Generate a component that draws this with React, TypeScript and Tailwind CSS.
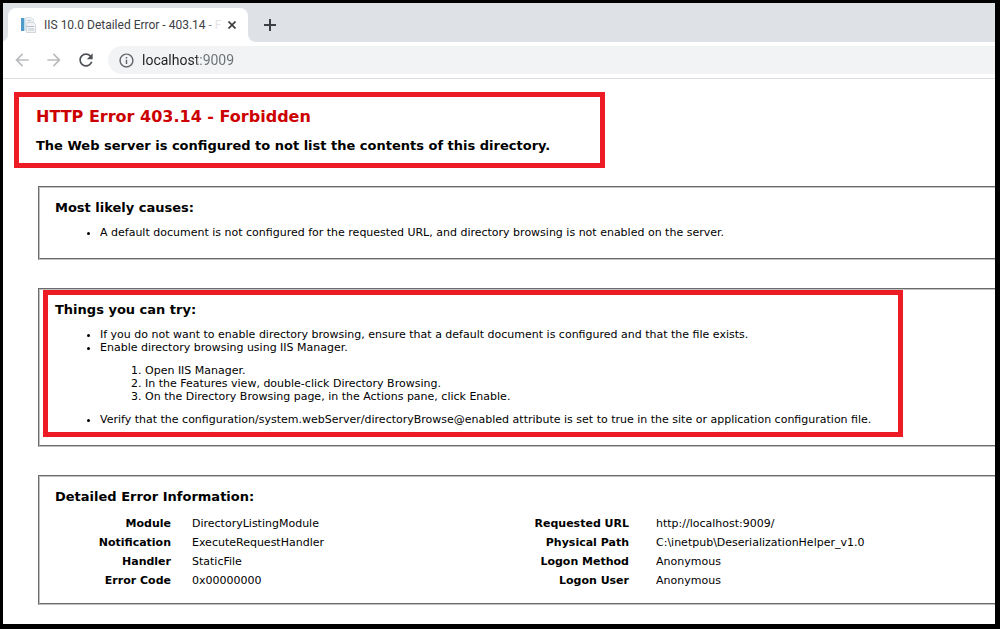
import type { ReactNode } from "react";

function Favicon() {
  return (
    <svg width="17" height="16" viewBox="0 0 17 16" className="shrink-0" aria-hidden="true">
      <rect x="1" y="1" width="3" height="13" fill="#4f9ac9" />
      <rect x="4" y="1" width="1" height="13" fill="#b9dbee" />
      <path d="M5.500 .5h6l2 2v11h-8z" fill="#eef1f4" stroke="#dde2e7" />
      <path d="M7 3.500h4" stroke="#c3cbd3" />
      <path d="M7.500 5.500h6l2 2v8h-9v-8z" fill="#f1f3f6" stroke="#d0d6dc" />
      <path d="M7 9.500h7" stroke="#b4bdc6" />
      <rect x="8" y="11" width="6" height="3" fill="#d8dde2" />
    </svg>
  );
}

function Icon({ d, className }: { d: string; className: string }) {
  return (
    <svg viewBox="0 0 24 24" fill="currentColor" className={className} aria-hidden="true">
      <path d={d} />
    </svg>
  );
}

function TabBar() {
  return (
    <div className="flex h-[39px] items-end bg-[#dee1e6]">
      <svg viewBox="0 0 5 8" className="h-2 w-[5px] shrink-0" aria-hidden="true">
        <path d="M5 0v8H0V7.400C3 6.300 5 3.500 5 0z" fill="#fff" />
      </svg>
      <div className="flex h-[34px] w-60 shrink-0 items-center rounded-t-lg bg-white pr-2 pl-3">
        <Favicon />
        <div className="ml-[7px] flex-1 text-[12px] leading-4 whitespace-nowrap text-[#3c4043]">
          IIS 10.0 Detailed Error - 403.14 <span className="text-[#85888a]">-</span> <span className="text-[#e4e5e6]">F</span>
        </div>
        <button type="button" aria-label="Close tab" className="flex size-4 shrink-0 items-center justify-center text-[#3c4043]">
          <svg viewBox="0 0 8 8" className="size-2" aria-hidden="true">
            <path d="M.5 .5l7 7M7.500 .5l-7 7" stroke="currentColor" strokeWidth="1.7" />
          </svg>
        </button>
      </div>
      <svg viewBox="0 0 8 8" className="size-2 shrink-0" aria-hidden="true">
        <path d="M0 0v8h8C3.600 8 0 4.400 0 0z" fill="#fff" />
      </svg>
      <button type="button" aria-label="New tab" className="flex h-[34px] w-7 items-center justify-center text-[#3c4043]">
        <svg viewBox="0 0 12 12" className="size-3" aria-hidden="true">
          <path d="M6 0v12M0 6h12" stroke="currentColor" strokeWidth="2" />
        </svg>
      </button>
    </div>
  );
}

function Toolbar() {
  return (
    <div className="flex h-[37px] items-center border-b border-[#dcdde0] bg-white pl-[9px]">
      <button type="button" aria-label="Back" className="text-[#babcbe]">
        <Icon className="size-5" d="M20 11H7.830l5.590-5.590L12 4l-8 8 8 8 1.410-1.410L7.830 13H20v-2z" />
      </button>
      <button type="button" aria-label="Forward" className="ml-3 text-[#babcbe]">
        <Icon className="size-5" d="M12 4l-1.410 1.410L16.170 11H4v2h12.170l-5.580 5.590L12 20l8-8z" />
      </button>
      <button type="button" aria-label="Reload" className="ml-3 text-[#4d5156]">
        <Icon
          className="size-5"
          d="M17.650 6.350C16.200 4.900 14.210 4 12 4c-4.420 0-7.990 3.580-7.990 8s3.570 8 7.990 8c3.730 0 6.840-2.550 7.730-6h-2.080c-.82 2.330-3.040 4-5.650 4-3.310 0-6-2.690-6-6s2.690-6 6-6c1.660 0 3.140.69 4.220 1.780L13 11h7V4l-2.350 2.350z"
        />
      </button>
      <div className="ml-3 flex h-7 min-w-0 flex-1 items-center rounded-l-full bg-[#f1f3f4] pl-[10px]">
        <Icon
          className="size-[17px] shrink-0 text-[#5f6368]"
          d="M11 7h2v2h-2V7zm0 4h2v6h-2v-6zm1-9C6.480 2 2 6.480 2 12s4.480 10 10 10 10-4.480 10-10S17.520 2 12 2zm0 18c-4.410 0-8-3.590-8-8s3.590-8 8-8 8 3.590 8 8-3.590 8-8 8z"
        />
        <input
          type="text"
          aria-label="Address"
          defaultValue="localhost:9009"
          className="ml-[7px] min-w-0 flex-1 bg-[linear-gradient(to_right,#202124_55px,#6b6f74_55px)] bg-clip-text text-[14px] leading-5 text-transparent outline-none"
        />
      </div>
    </div>
  );
}

function Panel({ children, className }: { children: ReactNode; className: string }) {
  return (
    <section
      className={`ml-[35px] border-2 border-r-0 border-[#c0c0c0] [border-style:groove] [border-right-style:none] ${className}`}
    >
      {children}
    </section>
  );
}

function PanelTitle({ children }: { children: ReactNode }) {
  return <h3 className="text-[13px] leading-4 font-bold">{children}</h3>;
}

function DetailTable({ rows, wide }: { rows: string[][]; wide?: boolean }) {
  return (
    <table className="w-full table-fixed">
      <tbody>
        {rows.map(([label, value]) => (
          <tr key={label} className="h-[19px]">
            <th scope="row" className={wide ? "w-[104px] text-right font-bold" : "w-[116px] text-right font-bold"}>
              {label}
            </th>
            <td className={wide ? "pl-[27px]" : "pl-[21px]"}>{value}</td>
          </tr>
        ))}
      </tbody>
    </table>
  );
}

export default function App() {
  return (
    <div className="flex min-h-screen flex-col overflow-hidden border-t-[3px] border-r-[5px] border-b-[5px] border-l-[3px] border-black bg-white">
      <header className="font-['Roboto','Noto_Sans',sans-serif]">
        <TabBar />
        <Toolbar />
      </header>
      <main className="flex-1 pt-[13px] pb-[18px] font-['DejaVu_Sans',Verdana,sans-serif] text-[11px] leading-[13px] text-black">
        <div className="ml-[11px] h-[76px] max-w-[591px] border-[5px] border-[#ed1c24] pt-[9px] pl-[17px]">
          <h1 className="text-[16px] leading-[22px] font-bold text-[#cc0000]">HTTP Error 403.14 - Forbidden</h1>
          <h2 className="mt-[10px] text-[13px] leading-4 font-bold">
            The Web server is configured to not list the contents of this directory.
          </h2>
        </div>

        <Panel className="mt-[18px] pt-3 pb-[19px] pl-[15px]">
          <PanelTitle>Most likely causes:</PanelTitle>
          <ul className="mt-[10px] list-disc pl-[45px]">
            <li>A default document is not configured for the requested URL, and directory browsing is not enabled on the server.</li>
          </ul>
        </Panel>

        <Panel className="mt-7 pb-2 pl-[3px]">
          <div className="max-w-[860px] border-[5px] border-[#ed1c24] pt-[7px] pb-[6px] pl-[7px]">
            <PanelTitle>Things you can try:</PanelTitle>
            <ul className="mt-[10px] list-disc pl-[45px]">
              <li>If you do not want to enable directory browsing, ensure that a default document is configured and that the file exists.</li>
              <li>
                Enable directory browsing using IIS Manager.
                <ol className="my-[10px] list-decimal pl-[45px]">
                  <li>Open IIS Manager.</li>
                  <li>In the Features view, double-click Directory Browsing.</li>
                  <li>On the Directory Browsing page, in the Actions pane, click Enable.</li>
                </ol>
              </li>
              <li>
                Verify that the configuration/system.webServer/directoryBrowse@enabled attribute is set to true in the site or application
                configuration file.
              </li>
            </ul>
          </div>
        </Panel>

        <Panel className="mt-7 pt-3 pb-[13px] pl-[15px]">
          <PanelTitle>Detailed Error Information:</PanelTitle>
          <div className="mt-[9px] grid grid-cols-2">
            <DetailTable
              rows={[
                ["Module", "DirectoryListingModule"],
                ["Notification", "ExecuteRequestHandler"],
                ["Handler", "StaticFile"],
                ["Error Code", "0x00000000"],
              ]}
            />
            <DetailTable
              wide
              rows={[
                ["Requested URL", "http://localhost:9009/"],
                ["Physical Path", "C:\\inetpub\\DeserializationHelper_v1.0"],
                ["Logon Method", "Anonymous"],
                ["Logon User", "Anonymous"],
              ]}
            />
          </div>
        </Panel>
      </main>
    </div>
  );
}
